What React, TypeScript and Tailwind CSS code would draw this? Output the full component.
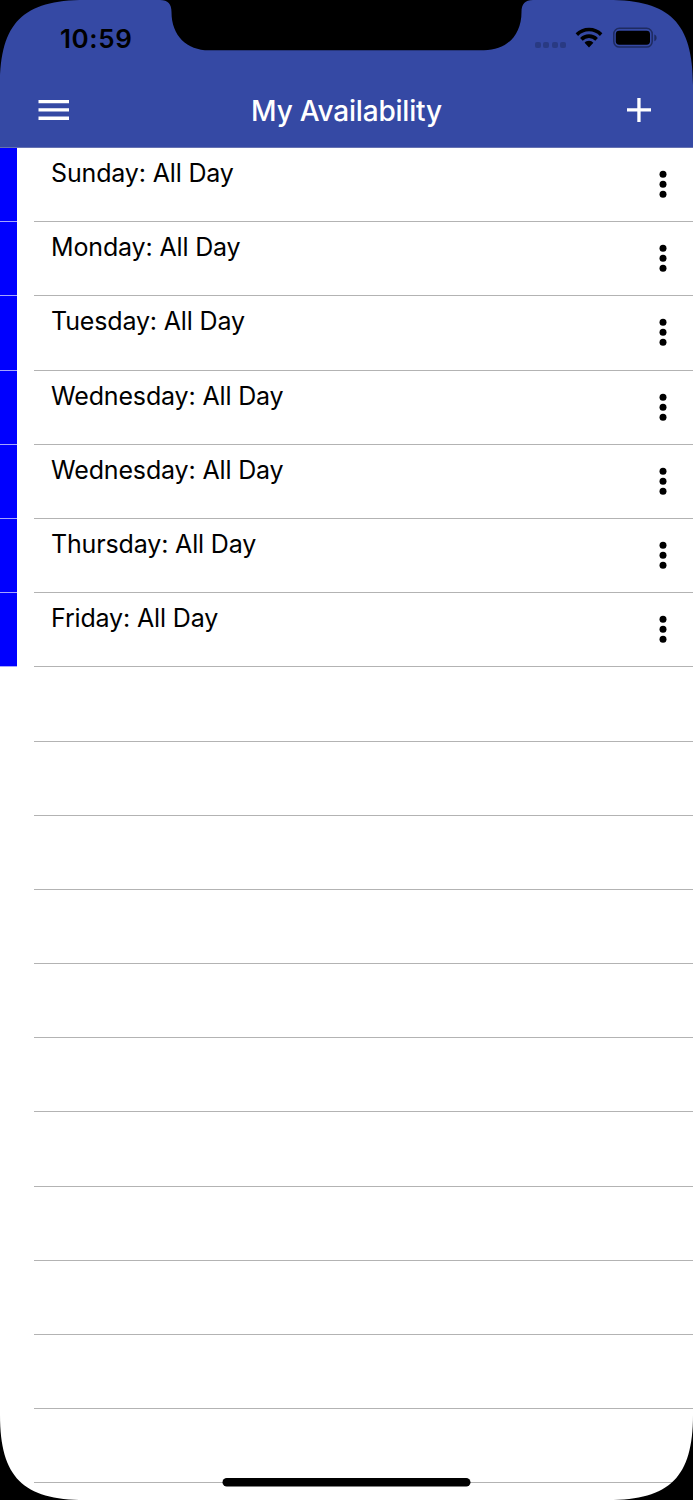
type TSlot = {
  day: string;
  hours: string;
};

const SLOTS: TSlot[] = [
  { day: "Sunday", hours: "All Day" },
  { day: "Monday", hours: "All Day" },
  { day: "Tuesday", hours: "All Day" },
  { day: "Wednesday", hours: "All Day" },
  { day: "Wednesday", hours: "All Day" },
  { day: "Thursday", hours: "All Day" },
  { day: "Friday", hours: "All Day" },
];

const EMPTY_ROWS = 11;

const WifiIcon = () => (
  <svg width="28" height="21" viewBox="0 0 28 21">
    <path d="M14 .7C8.900.7 4.100 2.700.6 6.200L3.100 8.900a15.300 15.300 0 0 1 21.800 0l2.500-2.700A18.900 18.900 0 0 0 14 .7Z" />
    <path d="M14 7.300a12.300 12.300 0 0 0-8.900 3.700l2.600 2.700a8.800 8.800 0 0 1 12.600 0l2.600-2.700A12.300 12.300 0 0 0 14 7.300Z" />
    <path d="M14 13.800c-1.800 0-3.300.7-4.400 1.900l4.400 4.900 4.400-4.900a6 6 0 0 0-4.400-1.900Z" />
  </svg>
);

const BatteryIcon = () => (
  <svg width="45" height="21" viewBox="0 0 45 21">
    <rect
      x="0.8"
      y="1.3"
      width="38.4"
      height="18.8"
      rx="5.6"
      fill="none"
      stroke="#1e2b61"
      strokeWidth="1.5"
    />
    <rect x="2.8" y="3.7" width="34.2" height="14" rx="3.4" />
    <path d="M41.300 7.500v6.800c1.500-.6 2.300-1.800 2.300-3.400S42.800 8.100 41.300 7.500Z" fill="#1e2b61" />
  </svg>
);

const StatusBar = () => (
  <div className="flex h-[73px] items-start justify-between pt-[24px] pr-[35px] pl-[60px] text-black">
    <div className="text-[26px] leading-[29px] font-semibold tracking-[0.6px]">
      10:59
    </div>
    <div className="flex pt-[3px]">
      <div className="mt-[15px] mr-[9px] flex gap-[2.4px]">
        <i className="h-[6px] w-[6px] rounded-[2px] bg-[#293a83]" />
        <i className="h-[6px] w-[6px] rounded-[2px] bg-[#293a83]" />
        <i className="h-[6px] w-[6px] rounded-[2px] bg-[#293a83]" />
        <i className="h-[6px] w-[6px] rounded-[2px] bg-[#293a83]" />
      </div>
      <WifiIcon />
      <div className="ml-[10px]">
        <BatteryIcon />
      </div>
    </div>
  </div>
);

const NavBar = () => (
  <div className="flex h-[74px] items-center justify-between px-[38px] text-white">
    <button aria-label="Menu" className="w-[60px]">
      <svg width="32" height="22" viewBox="0 0 32 22" fill="currentColor">
        <path d="M.5 1H31v3.300H.500ZM.5 9.300H31v3.300H.500ZM.5 17.600H31v3.300H.500Z" />
      </svg>
    </button>
    <h1 className="pt-[2px] text-[28px] font-medium tracking-[-0.2px]">
      My Availability
    </h1>
    <button aria-label="Add" className="flex w-[60px] justify-end pr-[3px]">
      <svg width="26" height="26" viewBox="0 0 26 26" fill="currentColor">
        <path d="M11.300 1h3.300v10.300H25v3.300H14.600V25h-3.300V14.600H1v-3.300h10.300Z" />
      </svg>
    </button>
  </div>
);

const SlotRow = ({ slot }: { slot: TSlot }) => (
  <li className="flex h-[74.19px]">
    <div className="w-[17px] border-b border-[#a5a5ff] bg-[#0000ff]" />
    <div className="ml-[17px] flex flex-1 justify-between border-b border-[#b3b3b3] pt-[9px] pr-[24px] pl-[17px]">
      <div className="text-[25px] leading-[32px] tracking-[-0.15px]">
        {slot.day}: {slot.hours}
      </div>
      <button aria-label="More" className="mt-[13px] h-[29px]">
        <svg width="12" height="29" viewBox="0 0 12 29">
          <circle cx="6" cy="4.300" r="3.500" />
          <circle cx="6" cy="14.300" r="3.500" />
          <circle cx="6" cy="24.300" r="3.500" />
        </svg>
      </button>
    </div>
  </li>
);

// Hardware cutouts of the phone: rounded corners, notch and home indicator
const DeviceFrame = () => (
  <svg
    className="pointer-events-none absolute inset-0"
    width="693"
    height="1500"
    viewBox="0 0 693 1500"
  >
    <path d="M0 0H85C23 0 0 23 0 85ZM693 0H608C670 0 693 23 693 85ZM0 1500H85C23 1500 0 1477 0 1415ZM693 1500H608C670 1500 693 1477 693 1415Z" />
    <path d="M160 0C168 0 171.500 4 171.500 12C171.500 36 187 50.300 209 50.300H484C506 50.300 521.500 36 521.500 12C521.500 4 525 0 533 0Z" />
    <rect x="222.500" y="1478" width="248" height="8.500" rx="4.250" />
  </svg>
);

const App = () => {
  return (
    <div className="relative h-[1500px] w-[693px] overflow-hidden bg-white font-[Inter,'Liberation_Sans',sans-serif] text-black">
      <header className="h-[148px] border-b border-[#6672b2] bg-[#3549a4]">
        <StatusBar />
        <NavBar />
      </header>
      <ul>
        {SLOTS.map((slot, index) => (
          <SlotRow key={index} slot={slot} />
        ))}
        {Array.from({ length: EMPTY_ROWS }, (_, index) => (
          <li
            key={index}
            className="ml-[34px] h-[74.19px] border-b border-[#b3b3b3]"
          />
        ))}
      </ul>
      <DeviceFrame />
    </div>
  );
};

export default App;
